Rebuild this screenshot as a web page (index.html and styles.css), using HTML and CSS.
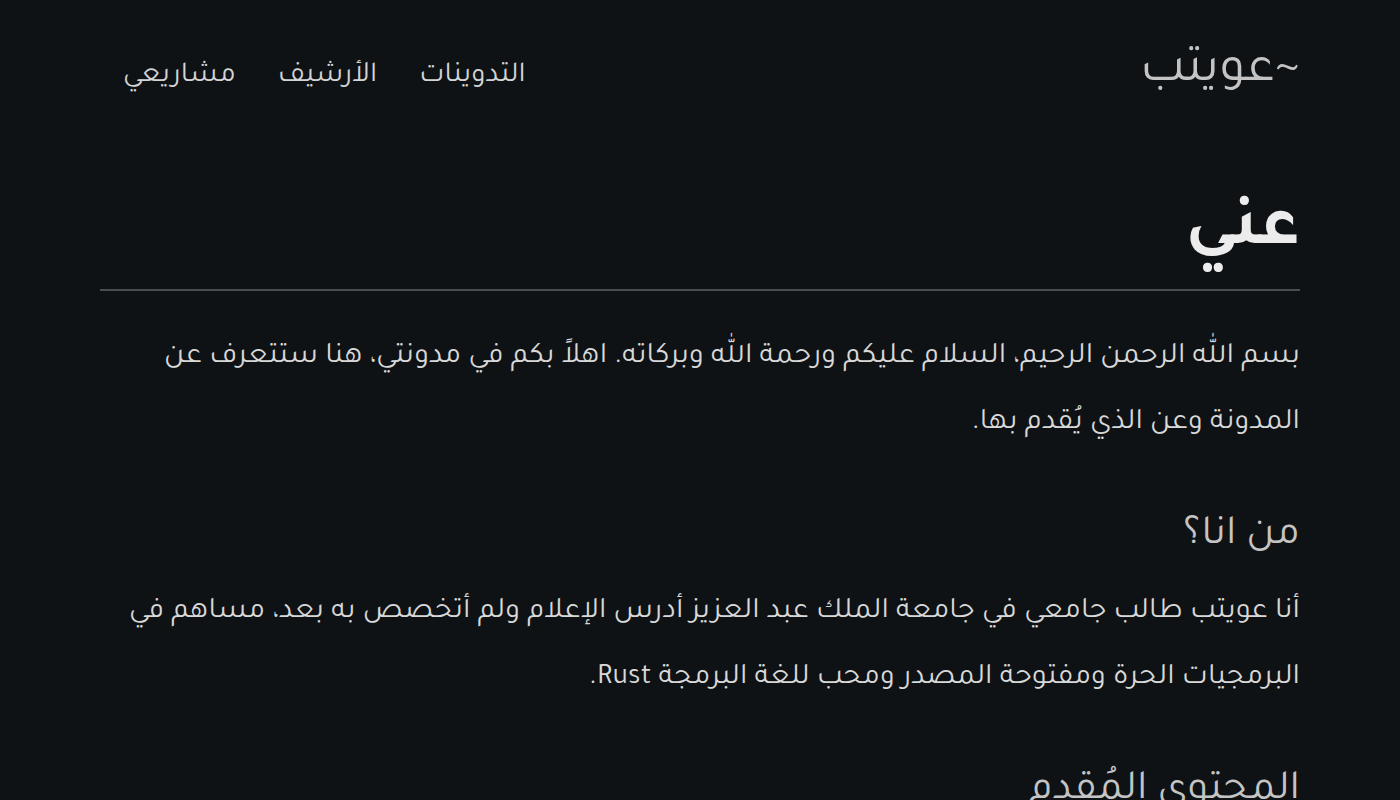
FILE: index.html
```html
<!DOCTYPE html>
<html lang="ar" dir="rtl">
<head>
<meta charset="utf-8">
<title>عني</title>
<link rel="stylesheet" href="styles.css">
</head>
<body>
<div class="page">
  <header class="site-header">
    <a class="logo" href="#">~عويتب</a>
    <nav class="nav">
      <a href="#">التدوينات</a>
      <a href="#">الأرشيف</a>
      <a href="#">مشاريعي</a>
    </nav>
  </header>
  <main class="content">
    <h1 class="title">عني</h1>
    <p>بسم الله الرحمن الرحيم، السلام عليكم ورحمة الله وبركاته. اهلاً بكم في مدونتي، هنا ستتعرف عن المدونة وعن الذي يُقدم بها.</p>
    <h2>من انا؟</h2>
    <p>أنا عويتب طالب جامعي في جامعة الملك عبد العزيز أدرس الإعلام ولم أتخصص به بعد، مساهم في البرمجيات الحرة ومفتوحة المصدر ومحب للغة البرمجة Rust.</p>
    <h2>المحتوى المُقدم</h2>
  </main>
</div>
</body>
</html>
```

FILE: styles.css
```css
html, body {
  margin: 0;
  padding: 0;
  background: #0f1215;
}
body {
  font-family: "Tajawal", "DejaVu Sans", sans-serif;
  color: #d8d8d8;
  font-feature-settings: "liga" 0, "dlig" 0;
}
.page {
  width: 1200px;
  margin: 0 auto;
}
.site-header {
  display: flex;
  justify-content: space-between;
  align-items: center;
  height: 146px;
}
.logo {
  color: #c4c4c4;
  text-decoration: none;
  font-size: 52px;
  line-height: 1;
}
.nav {
  display: flex;
  gap: 42px;
  padding-left: 23px;
  padding-top: 6px;
}
.nav a {
  color: #d4d4d4;
  text-decoration: none;
  font-size: 29px;
}
.title {
  margin: 0 0 34px;
  padding: 45px 0 14px;
  font-size: 70px;
  line-height: 84px;
  font-weight: 700;
  color: #ececec;
  border-bottom: 2px solid #4a4d50;
}
p {
  font-size: 30px;
  line-height: 66px;
  text-align: right;
  margin: 0;
}
h2 {
  font-size: 42px;
  line-height: 63px;
  font-weight: 400;
  color: #c4c4c4;
  margin: 49px 0 11px;
}
```
